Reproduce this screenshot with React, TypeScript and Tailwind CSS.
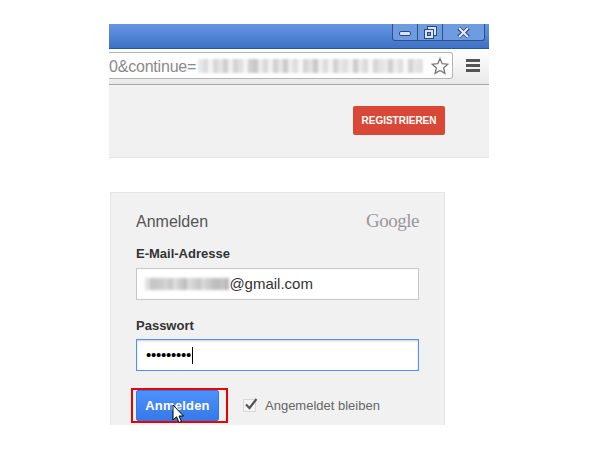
const urlBlur = ['#e8e8e8','#dcdcdc','#f2f2f2','#d8d8d8','#e4e4e4','#cfcfcf','#efefef','#d4d4d4','#e0e0e0','#f4f4f4','#d0d0d0','#c8c8c8','#ebebeb','#dadada','#f0f0f0','#d2d2d2','#e6e6e6','#cccccc','#ededed','#dedede','#f5f5f5','#d6d6d6','#e2e2e2','#c9c9c9','#eeeeee','#dcdcdc','#f3f3f3','#d3d3d3','#e7e7e7','#e0e0e0','#f1f1f1','#cdcdcd','#e9e9e9','#dbdbdb','#f6f6f6','#d7d7d7','#e3e3e3','#eaeaea','#d1d1d1','#ececec','#dfdfdf','#f7f7f7','#d5d5d5','#e5e5e5','#e1e1e1']
const mailBlur = ['#e0e0e0','#c4c4c4','#c8c8c8','#cccccc','#d4d4d4','#c8c8c8','#dcdcdc','#cccccc','#bdbdbd','#dcdcdc','#d0d0d0','#c6c6c6','#d8d8d8','#cccccc','#c0c0c0','#bcbcbc','#c4c4c4','#b8b8b8']

function WindowControls() {
  return (
    <div className="mr-[4px] flex h-[17px] w-[93px] rounded-b-[3px] border border-t-0 border-[#2f4f86] bg-[#6f9be0]">
      <div className="flex w-[25px] items-center justify-center border-r border-[#2f4f86]">
        <div className="mt-[3px] h-[5px] w-[12px] rounded-[2px] border border-[#2c4a7e] bg-[#d8e4f5]" />
      </div>
      <div className="flex w-[25px] items-center justify-center border-r border-[#2f4f86]">
        <svg width="13" height="13" viewBox="0 0 13 13" fill="none" stroke="#2c4a7e">
          <rect x="3.5" y="0.5" width="9" height="9" fill="#d8e4f5" />
          <rect x="0.5" y="3.5" width="9" height="9" fill="#d8e4f5" />
          <rect x="3.5" y="6.5" width="3" height="3" fill="#6f9be0" />
        </svg>
      </div>
      <div className="flex flex-1 items-center justify-center">
        <svg width="13" height="11" viewBox="0 0 13 11">
          <path d="M1.5 1 L11.5 10 M11.5 1 L1.5 10" stroke="#2c4a7e" strokeWidth="3.8" />
          <path d="M2 1 L11 10 M11 1 L2 10" stroke="#e4ecf8" strokeWidth="2" />
        </svg>
      </div>
    </div>
  )
}

function BrowserPanel() {
  return (
    <div className="ml-[109px] w-[380px]">
      <div className="flex h-[25px] justify-end border-b border-[#2f5597] bg-gradient-to-b from-[#6496e4] to-[#3f72c6]">
        <WindowControls />
      </div>
      <div className="flex h-[36px] items-start border-b border-[#a8a8a8] bg-gradient-to-b from-white to-[#e9e9e9] pt-[3px]">
        <div className="flex h-[27px] w-[344px] items-center rounded-r-[3px] border-y border-r border-[#b4b4b4] bg-white">
          <span className="mt-[2px] text-[16px] tracking-[-0.2px] text-[#8a8a8a]">0&amp;continue=</span>
          <div className="ml-[2px] flex h-[14px] blur-[1px]">
            {urlBlur.map((c, i) => (
              <div key={i} className="h-full w-[5px]" style={{ backgroundColor: c }} />
            ))}
          </div>
          <svg className="ml-auto mr-[3px] shrink-0" width="18" height="18" viewBox="0 0 18 18">
            <path d="M9 1.5 L11.2 6.7 L16.8 7.2 L12.6 10.9 L13.9 16.4 L9 13.5 L4.1 16.4 L5.4 10.9 L1.2 7.2 L6.8 6.7 Z" fill="#fff" stroke="#777777" strokeWidth="1.3" />
          </svg>
        </div>
        <div className="ml-[13px] mt-[7px] flex w-[14px] flex-col gap-[2px]">
          <div className="h-[3px] bg-[#555555]" />
          <div className="h-[3px] bg-[#555555]" />
          <div className="h-[3px] bg-[#555555]" />
        </div>
      </div>
      <div className="flex h-[73px] items-start justify-end border-b border-[#e5e5e5] bg-[#f1f1f1] pr-[44px] pt-[21px]">
        <button className="h-[29px] w-[92px] rounded-[2px] bg-[#d94836] text-[10px] font-bold text-white">
          REGISTRIEREN
        </button>
      </div>
    </div>
  )
}

function LoginCard() {
  return (
    <div className="ml-[110px] mt-[34px] h-[233px] w-[335px] border-x border-t border-[#e5e5e5] bg-[#f1f1f1] px-[25px]">
      <div className="flex h-[40px] items-end justify-between">
        <span className="text-[16px] leading-[22px] text-[#555555]">Anmelden</span>
        <span className="text-[19px] leading-[24px] tracking-[-0.5px] text-[#999999] [font-family:'Liberation_Serif',serif]">Google</span>
      </div>
      <p className="mt-[13px] text-[13px] font-bold leading-[16px] text-[#333333]">E-Mail-Adresse</p>
      <div className="mt-[6px] flex h-[32px] items-center border border-[#c8c8c8] bg-white pl-[8px]">
        <div className="flex h-[12px] blur-[1.5px]">
          {mailBlur.map((c, i) => (
            <div key={i} className="h-full w-[4.7px]" style={{ backgroundColor: c }} />
          ))}
        </div>
        <span className="text-[15px] text-[#333333]">@gmail.com</span>
      </div>
      <p className="mt-[18px] text-[13px] font-bold leading-[16px] text-[#333333]">Passwort</p>
      <div className="mt-[5px] flex h-[32px] items-center border border-[#4d90fe] bg-white pl-[9px] shadow-[inset_0_1px_2px_rgba(0,0,0,0.2)]">
        <span className="text-[15px] tracking-[-0.25px] text-black">•••••••••</span>
        <div className="ml-[1px] h-[17px] w-[1px] bg-black" />
      </div>
      <div className="mt-[19px] flex items-start">
        <div className="relative">
          <button className="h-[31px] w-[83px] rounded-[2px] border border-[#3079ed] bg-gradient-to-b from-[#4d90fe] to-[#357ae8] text-[13px] font-bold tracking-[0.2px] text-white">
            Anmelden
          </button>
          <div className="absolute left-[-5px] top-[-2px] h-[35px] w-[97px] border-2 border-[#ee0000]" />
          <svg className="absolute left-[36px] top-[14px]" width="13" height="21" viewBox="0 0 13 21">
            <path d="M1 1 L1 16 L4.5 12.8 L7 18.5 L9.5 17.4 L7 12 L11.5 12 Z" fill="#fff" stroke="#000" strokeWidth="1" />
          </svg>
        </div>
        <div className="ml-[24px] mt-[6px] flex items-center">
          <div className="relative h-[13px] w-[13px] border border-[#d8d8d8] bg-[#f5f5f5]">
            <svg className="absolute left-0 top-[-3px]" width="15" height="14" viewBox="0 0 15 14">
              <path d="M2 7.5 L5.5 11 L12.5 2" fill="none" stroke="#555555" strokeWidth="2.2" />
            </svg>
          </div>
          <span className="ml-[9px] text-[13px] text-[#666666]">Angemeldet bleiben</span>
        </div>
      </div>
    </div>
  )
}

export default function App() {
  return (
    <div className="h-[449px] w-[598px] overflow-hidden bg-white pt-[24px] [font-family:'Liberation_Sans',Arial,sans-serif]">
      <BrowserPanel />
      <LoginCard />
    </div>
  )
}
